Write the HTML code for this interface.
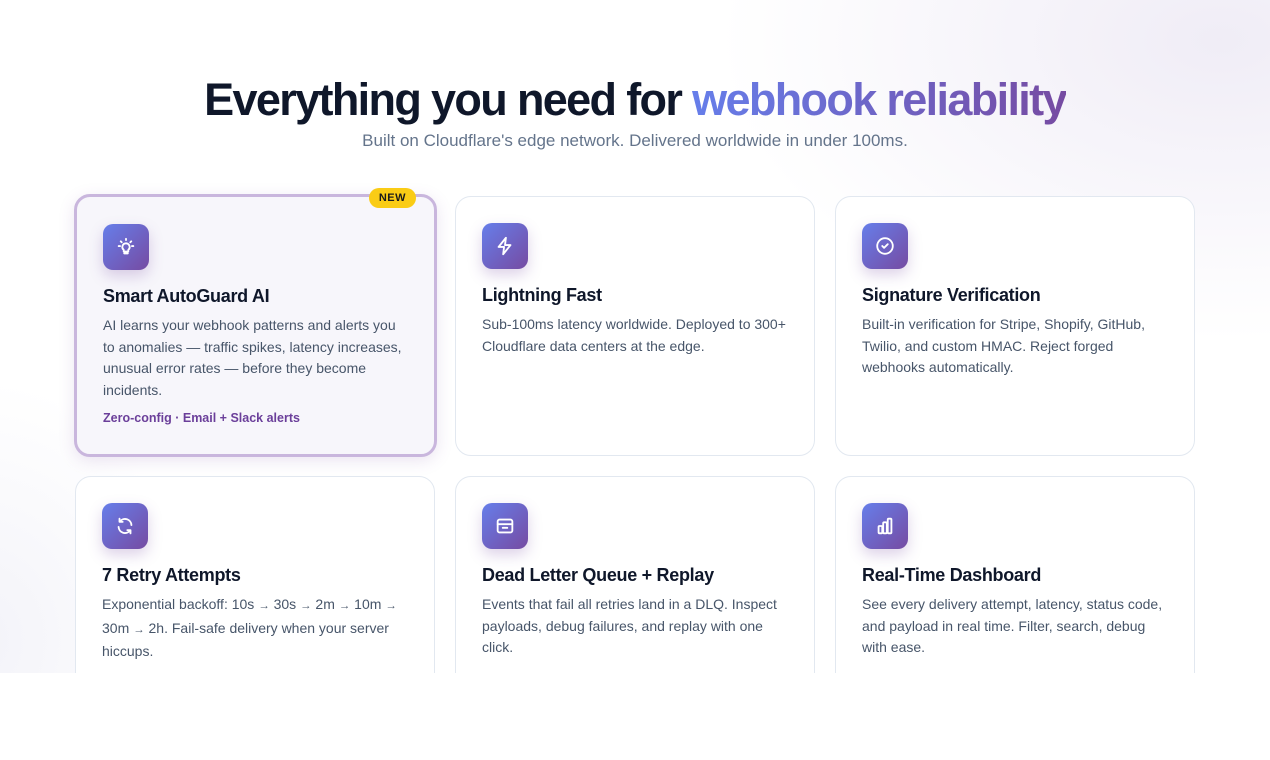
<!DOCTYPE html>
<html><head><meta charset="utf-8"><style>
*{box-sizing:border-box;margin:0;padding:0}
body{width:1270px;height:760px;background:#fff;font-family:"Liberation Sans",sans-serif;overflow:hidden}
.sec{position:relative;height:673px;overflow:hidden;background:radial-gradient(ellipse 500px 300px at 1220px 40px,rgba(236,232,244,.8),rgba(255,255,255,0)),radial-gradient(ellipse 220px 260px at -20px 640px,rgba(238,238,246,.7),rgba(255,255,255,0)),#fff}
h1{position:absolute;top:74px;left:0;width:1270px;text-align:center;font-size:45px;font-weight:700;color:#0f172a;letter-spacing:-1.65px}
h1 span{background:linear-gradient(90deg,#667eea,#764ba2);-webkit-background-clip:text;color:transparent}
.sub{position:absolute;top:131px;width:1270px;text-align:center;font-size:17px;color:#64748b}
.card{position:absolute;width:360px;height:260px;border:1px solid #e2e8f0;border-radius:16px;background:#fff;padding:26px 26px}
.card.hl{border:3px solid #c9b6dd;background:#f7f6fb;box-shadow:0 4px 16px rgba(118,75,162,.15);left:74px;top:194px;width:363px;height:263px;padding:27px 26px}
.ic{width:46px;height:46px;border-radius:10px;background:linear-gradient(135deg,#667eea,#764ba2);box-shadow:0 6px 14px rgba(118,75,162,.25);display:flex;align-items:center;justify-content:center}
.card h3{font-size:18px;font-weight:700;color:#0f172a;margin-top:16px;letter-spacing:-.3px}
.card p{font-size:14px;line-height:21.5px;color:#475569;margin-top:8px}
.a{font-size:11.5px}
.tag{font-size:12.5px;font-weight:700;color:#6b3f9a;margin-top:10px}
.new{position:absolute;top:-9px;right:18px;background:#facc15;color:#1a1a1a;font-size:11px;font-weight:700;letter-spacing:.5px;padding:4px 10px;border-radius:10px}
svg{width:22px;height:22px;fill:none;stroke:#fff;stroke-width:2;stroke-linecap:round;stroke-linejoin:round}
</style></head><body><div class="sec">
<h1>Everything you need for <span>webhook reliability</span></h1>
<div class="sub">Built on Cloudflare's edge network. Delivered worldwide in under 100ms.</div>

<div class="card hl"><div class="new">NEW</div>
<div class="ic"><svg viewBox="0 0 24 24"><path d="M10 19h4M12 8a4 4 0 0 0-2.5 7.1V17h5v-1.9A4 4 0 0 0 12 8zM12 3v1.5M4 11h1.5M18.5 11H20M6.3 5.8l1 1M17.7 5.8l-1 1"/></svg></div>
<h3>Smart AutoGuard AI</h3>
<p>AI learns your webhook patterns and alerts you to anomalies — traffic spikes, latency increases, unusual error rates — before they become incidents.</p>
<div class="tag">Zero-config · Email + Slack alerts</div></div>

<div class="card" style="left:455px;top:196px"><div class="ic"><svg viewBox="0 0 24 24"><path d="M13 3 5 13h6l-1 8 8-10h-6z"/></svg></div>
<h3>Lightning Fast</h3><p>Sub-100ms latency worldwide. Deployed to 300+ Cloudflare data centers at the edge.</p></div>

<div class="card" style="left:835px;top:196px"><div class="ic"><svg viewBox="0 0 24 24"><circle cx="12" cy="12" r="8.5"/><path d="m9 12 2 2 4-4"/></svg></div>
<h3>Signature Verification</h3><p>Built-in verification for Stripe, Shopify, GitHub, Twilio, and custom HMAC. Reject forged webhooks automatically.</p></div>

<div class="card" style="left:75px;top:476px"><div class="ic"><svg viewBox="0 0 24 24"><path d="M19 11a7 7 0 0 0-12.5-4M6 4v3.5h3.5M5 13a7 7 0 0 0 12.5 4M18 20v-3.5h-3.5"/></svg></div>
<h3>7 Retry Attempts</h3><p>Exponential backoff: 10s <span class="a">→</span> 30s <span class="a">→</span> 2m <span class="a">→</span> 10m <span class="a">→</span> 30m <span class="a">→</span> 2h. Fail-safe delivery when your server hiccups.</p></div>

<div class="card" style="left:455px;top:476px"><div class="ic"><svg viewBox="0 0 24 24"><rect x="4" y="5" width="16" height="14" rx="2"/><path d="M4 10h16M9.5 14h5"/></svg></div>
<h3>Dead Letter Queue + Replay</h3><p>Events that fail all retries land in a DLQ. Inspect payloads, debug failures, and replay with one click.</p></div>

<div class="card" style="left:835px;top:476px"><div class="ic"><svg viewBox="0 0 24 24"><rect x="5" y="12" width="4" height="8" rx="1"/><rect x="10" y="8" width="4" height="12" rx="1"/><rect x="15" y="4" width="4" height="16" rx="1"/></svg></div>
<h3>Real-Time Dashboard</h3><p>See every delivery attempt, latency, status code, and payload in real time. Filter, search, debug with ease.</p></div>
</div></body></html>
